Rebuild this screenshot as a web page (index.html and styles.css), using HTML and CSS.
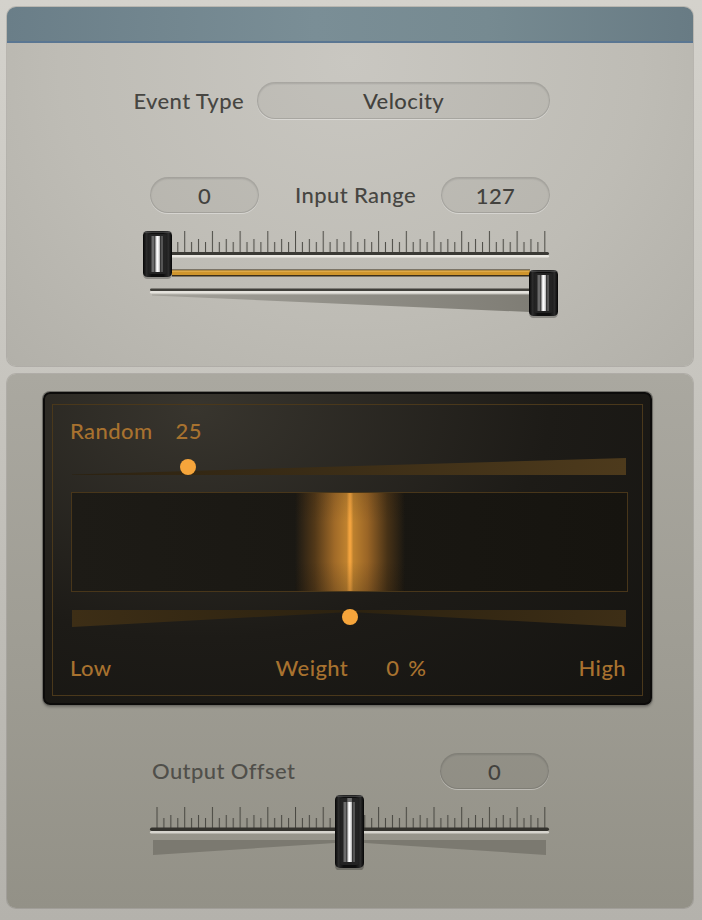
FILE: index.html
```html
<!DOCTYPE html>
<html lang="en">
<head>
  <meta charset="UTF-8">
  <title>Randomizer</title>
  <link rel="stylesheet" href="styles.css">
</head>
<body>
  <div class="frame">
    <!-- Input section -->
    <section class="panel panel-top">
      <div class="title-bar"></div>
      <div class="controls">
        <div class="row event-row">
          <span class="label">Event Type</span>
          <div class="field field-wide">Velocity</div>
        </div>
        <div class="row range-row">
          <div class="field">0</div>
          <span class="label">Input Range</span>
          <div class="field">127</div>
        </div>
        <svg class="slider range-slider" width="420" height="92" viewBox="0 0 420 92">
          <defs>
            <pattern id="ticks-top" width="27.7" height="21" x="16.5" y="3" patternUnits="userSpaceOnUse">
              <g stroke="#4f4e48" stroke-width="1.1">
                <line x1="0.5" y1="0" x2="0.5" y2="21"/>
                <line x1="7.4" y1="11" x2="7.4" y2="21"/>
                <line x1="14.35" y1="8" x2="14.35" y2="21"/>
                <line x1="21.3" y1="11" x2="21.3" y2="21"/>
              </g>
            </pattern>
            <pattern id="ticks-bottom" width="27.7" height="21" x="16.5" y="17" patternUnits="userSpaceOnUse">
              <g stroke="#4a4943" stroke-width="1.1">
                <line x1="0.5" y1="0" x2="0.5" y2="21"/>
                <line x1="7.4" y1="11" x2="7.4" y2="21"/>
                <line x1="14.35" y1="8" x2="14.35" y2="21"/>
                <line x1="21.3" y1="11" x2="21.3" y2="21"/>
              </g>
            </pattern>
            <linearGradient id="knob-body" x1="0" x2="1" y1="0" y2="0">
              <stop offset="0" stop-color="#050505"/>
              <stop offset="0.12" stop-color="#2b2b2b"/>
              <stop offset="0.3" stop-color="#0e0e0e"/>
              <stop offset="0.7" stop-color="#0e0e0e"/>
              <stop offset="0.88" stop-color="#2b2b2b"/>
              <stop offset="1" stop-color="#050505"/>
            </linearGradient>
            <linearGradient id="knob-stripe" x1="0" x2="1" y1="0" y2="0">
              <stop offset="0" stop-color="#b8b8b8"/>
              <stop offset="0.45" stop-color="#ffffff"/>
              <stop offset="1" stop-color="#c9c9c9"/>
            </linearGradient>
            <linearGradient id="grey-wedge" x1="0" x2="1" y1="0" y2="0">
              <stop offset="0" stop-color="#a3a19a"/>
              <stop offset="1" stop-color="#7f7d75"/>
            </linearGradient>
            <linearGradient id="amber-wedge" x1="0" x2="1" y1="0" y2="0">
              <stop offset="0" stop-color="#2c2211"/>
              <stop offset="1" stop-color="#4d3a1c"/>
            </linearGradient>
            <linearGradient id="amber-bow" x1="0" x2="1" y1="0" y2="0">
              <stop offset="0" stop-color="#3d2e16"/>
              <stop offset="0.5" stop-color="#2c2210"/>
              <stop offset="1" stop-color="#3d2e16"/>
            </linearGradient>
          </defs>

          <!-- scale -->
          <rect x="30" y="3" width="376" height="21" fill="url(#ticks-top)"/>
          <rect x="30" y="24" width="379" height="3.2" rx="1.6" fill="#3b3a35"/>
          <rect x="30" y="27" width="379" height="2.4" rx="1.2" fill="#e9e7e1"/>

          <!-- selected range -->
          <rect x="32" y="41.5" width="358" height="7" fill="#3b2f1b"/>
          <rect x="32" y="42.5" width="358" height="4.5" fill="#cf952c"/>
          <rect x="32" y="42.5" width="358" height="1.2" fill="#e4b255"/>

          <!-- lower track + wedge -->
          <rect x="10" y="60.5" width="380" height="2.6" rx="1.3" fill="#403f3a"/>
          <rect x="10" y="63" width="380" height="2.4" rx="1.2" fill="#e4e2dc"/>
          <polygon points="12,66.5 390,66.5 390,84 12,67.5" fill="url(#grey-wedge)"/>

          <!-- min knob -->
          <g transform="translate(3 3)">
            <rect y="2" width="29" height="46" rx="4.5" fill="#000" opacity="0.25"/>
            <rect width="29" height="46" rx="4.5" fill="url(#knob-body)"/>
            <rect x="1" y="0.5" width="27" height="1.5" rx="0.75" fill="#5a5a5a" opacity="0.6"/>
            <rect x="5.5" y="3" width="18" height="40" rx="2" fill="#232323"/>
            <rect x="8.5" y="5" width="3" height="36" fill="#6b6b6b"/>
            <rect x="12.3" y="5" width="4.6" height="36" fill="url(#knob-stripe)"/>
            <rect x="17.6" y="5" width="2.4" height="36" fill="#545454"/>
          </g>
          <!-- max knob -->
          <g transform="translate(389 42)">
            <rect y="2" width="29" height="46" rx="4.5" fill="#000" opacity="0.25"/>
            <rect width="29" height="46" rx="4.5" fill="url(#knob-body)"/>
            <rect x="1" y="0.5" width="27" height="1.5" rx="0.75" fill="#5a5a5a" opacity="0.6"/>
            <rect x="5.5" y="3" width="18" height="40" rx="2" fill="#232323"/>
            <rect x="8.5" y="5" width="3" height="36" fill="#6b6b6b"/>
            <rect x="12.3" y="5" width="4.6" height="36" fill="url(#knob-stripe)"/>
            <rect x="17.6" y="5" width="2.4" height="36" fill="#545454"/>
          </g>
        </svg>
      </div>
    </section>

    <!-- Randomizer section -->
    <section class="panel panel-bottom">
      <div class="display">
        <div class="display-inner">
          <div class="readout">
            <span>Random</span>
            <span>25</span>
          </div>
          <svg class="amount" width="556" height="22" viewBox="0 0 556 22">
            <polygon points="1,19.5 555,3 555,20 1,20" fill="url(#amber-wedge)"/>
            <circle cx="117" cy="12" r="8" fill="#f6a53b"/>
          </svg>
          <div class="graph">
            <div class="glow"></div>
          </div>
          <svg class="weight" width="556" height="27" viewBox="0 0 556 27">
            <polygon points="1,5 555,5 555,22 279,7 1,22" fill="url(#amber-bow)"/>
            <circle cx="279" cy="12" r="8" fill="#f6a53b"/>
          </svg>
          <div class="scale-labels">
            <span>Low</span>
            <span class="weight-readout">
              <span>Weight</span>
              <span class="percent">0 %</span>
            </span>
            <span>High</span>
          </div>
        </div>
      </div>

      <div class="controls">
        <div class="row offset-row">
          <span class="label">Output Offset</span>
          <div class="field field-dark">0</div>
        </div>
        <svg class="slider offset-slider" width="420" height="80" viewBox="0 0 420 80">
          <rect x="15" y="17" width="391" height="21" fill="url(#ticks-bottom)"/>
          <rect x="10" y="37.5" width="399" height="3.5" rx="1.75" fill="#34332e"/>
          <rect x="10" y="41" width="399" height="2.5" rx="1.25" fill="#d6d4cd"/>
          <polygon points="13,50 406,50 406,65 210,52 13,65" fill="#7b7970"/>

          <g transform="translate(195 5)">
            <rect y="3" width="29" height="73" rx="5" fill="#000" opacity="0.25"/>
            <rect width="29" height="73" rx="5" fill="url(#knob-body)"/>
            <rect x="1" y="0.5" width="27" height="1.5" rx="0.75" fill="#5a5a5a" opacity="0.6"/>
            <rect x="5.5" y="3" width="18" height="67" rx="2" fill="#232323"/>
            <rect x="12.3" y="3" width="4.6" height="4" fill="#6e6e6e"/>
            <rect x="8.5" y="7" width="3" height="60" fill="#6b6b6b"/>
            <rect x="12.3" y="7" width="4.6" height="60" fill="url(#knob-stripe)"/>
            <rect x="17.6" y="7" width="2.4" height="60" fill="#545454"/>
          </g>
        </svg>
      </div>
    </section>
  </div>
</body>
</html>
```

FILE: styles.css
```css
body {
  margin: 0;
  width: 702px;
  height: 920px;
  overflow: hidden;
  font-family: Lato, "Open Sans", sans-serif;
  font-size: 22px;
  font-weight: 500;
  letter-spacing: 0.4px;
  background: linear-gradient(#d4d2cc, #c6c4be 45%, #b4b2ac);
}
.frame {
  display: flex;
  flex-direction: column;
  gap: 8px;
  padding: 7px 9px 0 7px;
}
.panel {
  border-radius: 9px;
  overflow: hidden;
  box-shadow: 0 0 0 1px rgba(90, 88, 80, 0.22);
}
.panel-top {
  height: 359px;
  background: radial-gradient(ellipse at 50% 15%, #c9c7c1, #bebcb5 60%, #b2b0a9);
}
.panel-bottom {
  height: 534px;
  background: linear-gradient(#aaa8a0, #9f9d94 50%, #939187);
}
.title-bar {
  height: 34px;
  background: linear-gradient(90deg, #6a7e88, #7a8e96 45%, #768a91 70%, #687b84);
  border-bottom: 2px solid #5a7692;
}
.controls {
  width: 400px;
  margin-left: 143px;
  display: flex;
  flex-direction: column;
}
.row {
  display: flex;
  align-items: center;
}
.label {
  flex-shrink: 0;
  white-space: nowrap;
  line-height: 26px;
  color: #474642;
}
.field {
  flex-shrink: 0;
  box-sizing: border-box;
  width: 109px;
  height: 36px;
  border-radius: 18px;
  display: flex;
  align-items: center;
  justify-content: center;
  color: #43423e;
  background: rgba(0, 0, 0, 0.035);
  border: 1px solid rgba(0, 0, 0, 0.12);
  box-shadow: inset 0 1px 2px rgba(0, 0, 0, 0.12), 0 1px 0 rgba(255, 255, 255, 0.35);
}
.field-wide {
  width: 293px;
  height: 37px;
}
.field-dark {
  background: rgba(0, 0, 0, 0.05);
  margin-right: 1px;
}
.event-row {
  height: 37px;
  margin-top: 39px;
  justify-content: flex-end;
  gap: 13px;
}
.range-row {
  height: 36px;
  margin-top: 58px;
  justify-content: space-between;
}
.range-row .label {
  margin-left: 11px;
}
.slider {
  display: block;
  margin-left: -10px;
}
.range-slider {
  margin-top: 15px;
}

/* dark randomizer display */
.display {
  box-sizing: border-box;
  width: 609px;
  height: 313px;
  margin: 18px 0 0 36px;
  padding: 10px 7px 7px;
  border: 2px solid #0c0b0a;
  border-radius: 7px;
  background: radial-gradient(ellipse at 25% 5%, #38352e, #1d1b17 55%, #141310);
  box-shadow: 0 0 0 1px #6d6c66, 0 2px 3px rgba(0, 0, 0, 0.3);
}
.display-inner {
  box-sizing: border-box;
  height: 100%;
  border: 1px solid #4a381b;
  color: #a8722f;
  line-height: 24px;
}
.readout {
  display: flex;
  gap: 23px;
  margin: 14px 0 0 17px;
}
.amount,
.weight {
  display: block;
  margin-left: 18px;
}
.amount {
  margin-top: 12px;
}
.graph {
  box-sizing: border-box;
  width: 557px;
  height: 100px;
  margin: 15px 0 0 18px;
  border: 1px solid #48361a;
  background: linear-gradient(90deg, #1d1b16, #16140f);
  display: flex;
  justify-content: center;
}
.glow {
  width: 110px;
  height: 100%;
  background:
    linear-gradient(rgba(20, 16, 10, 0.12), transparent 30%, transparent 70%, rgba(20, 16, 10, 0.2)),
    linear-gradient(90deg, rgba(100, 64, 22, 0) 0%, rgba(120, 78, 28, 0.6) 18%, #a06a28 36%, #bf822f 47%, #f2a33e 49.3%, #f2a33e 50.7%, #bd812e 53%, #9a6526 66%, rgba(110, 72, 26, 0.55) 84%, rgba(100, 64, 22, 0) 100%);
}
.weight {
  margin-top: 13px;
}
.scale-labels {
  display: flex;
  justify-content: space-between;
  margin: 24px 16px 0 17px;
}
.weight-readout {
  display: flex;
  gap: 38px;
  margin-left: 12px;
}
.percent {
  word-spacing: 3px;
}

.offset-row {
  height: 36px;
  margin-top: 48px;
  justify-content: space-between;
}
.offset-row .label {
  padding-left: 2px;
  color: #504f4a;
}
.offset-slider {
  margin-top: 1px;
}
```
